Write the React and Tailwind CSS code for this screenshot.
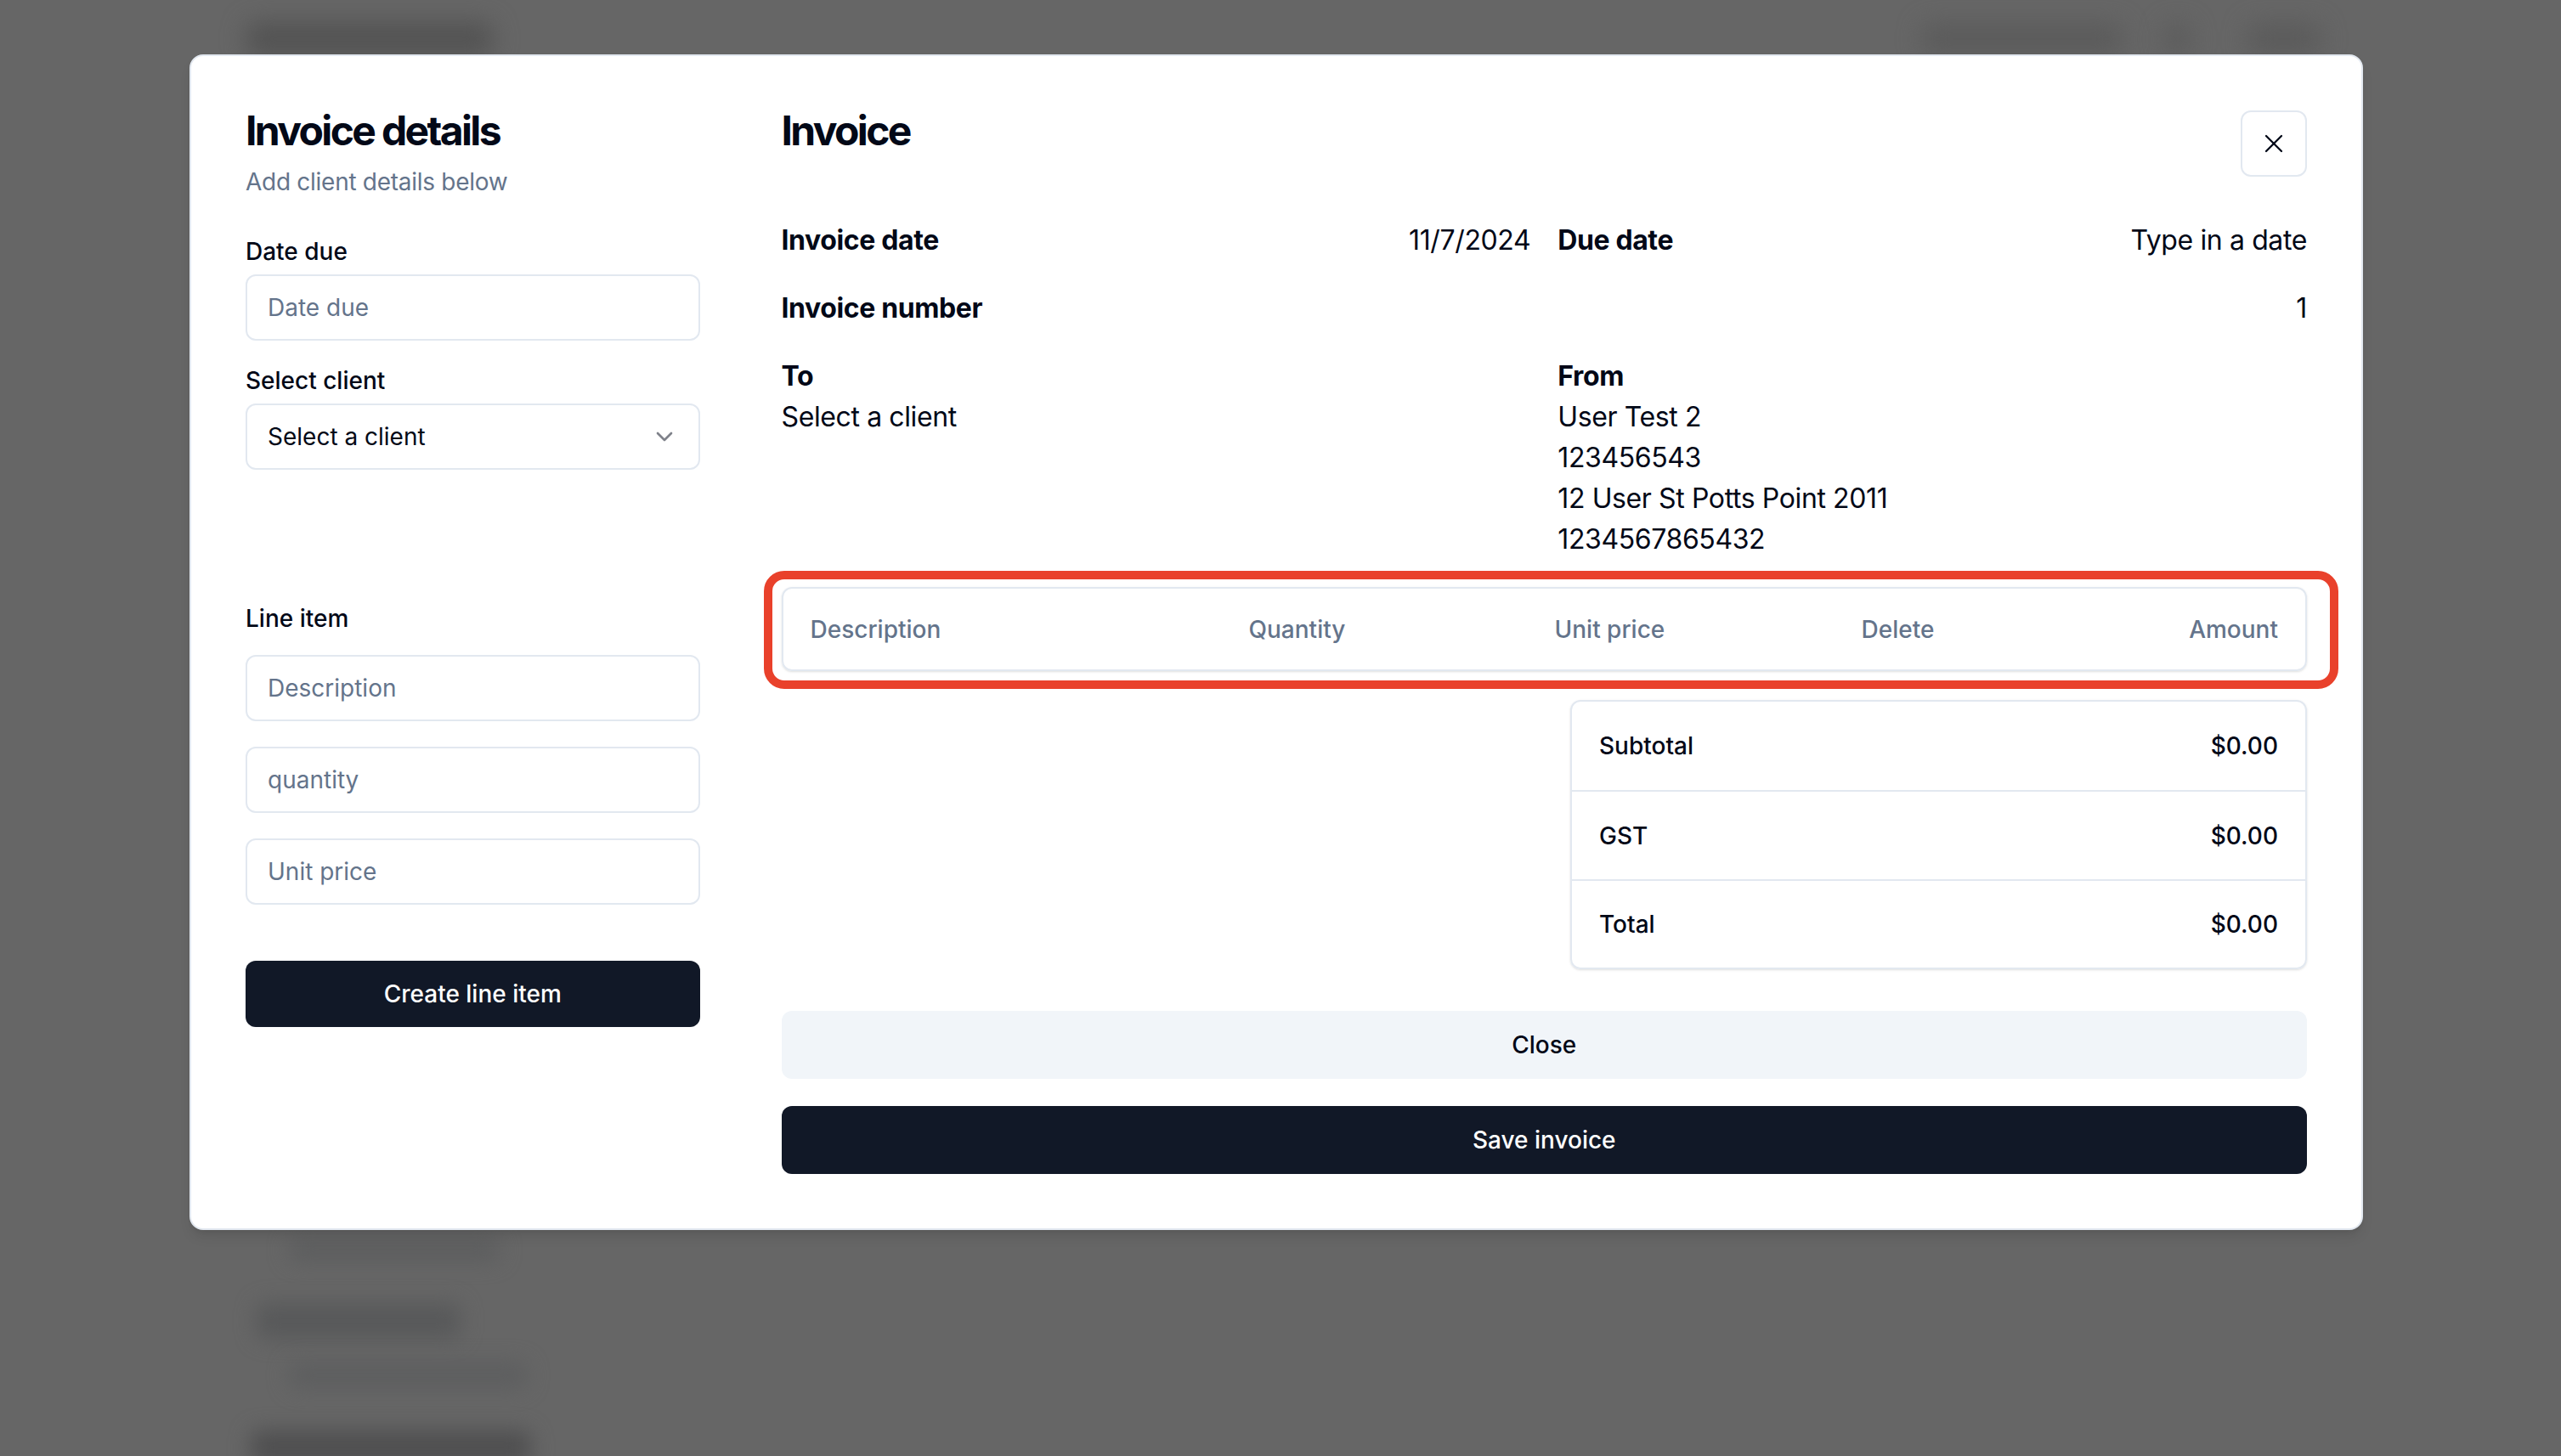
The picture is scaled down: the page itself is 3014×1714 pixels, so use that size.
import React from "react";
import { X, ChevronDown } from "lucide-react";

function Label({ children, className = "" }) {
  return (
    <div className={"text-[28px] leading-[28px] font-medium text-[#020817] " + className}>
      {children}
    </div>
  );
}

function Field({ placeholder, className = "" }) {
  return (
    <div
      className={
        "h-[78px] w-full rounded-[12px] border-2 border-[#e2e8f0] bg-white px-[24px] flex items-center text-[28px] text-[#64748b] " +
        className
      }
    >
      {placeholder}
    </div>
  );
}

export default function App() {
  return (
    <div className="relative w-[3014px] h-[1714px] overflow-hidden bg-[#666666] font-['Inter',sans-serif]">
      {/* blurred page content beneath the overlay */}
      <div className="absolute left-[290px] top-[26px] w-[290px] h-[40px] rounded-[12px] bg-[#535353] blur-[14px]" />
      <div className="absolute left-[2262px] top-[28px] w-[236px] h-[36px] rounded-[12px] bg-[#5b5b5b] blur-[14px]" />
      <div className="absolute left-[2548px] top-[28px] w-[30px] h-[36px] rounded-[12px] bg-[#5b5b5b] blur-[14px]" />
      <div className="absolute left-[2645px] top-[28px] w-[86px] h-[36px] rounded-[12px] bg-[#5b5b5b] blur-[14px]" />
      <div className="absolute left-[340px] top-[1458px] w-[248px] h-[26px] rounded-[12px] bg-[#5c5d5e] blur-[12px]" />
      <div className="absolute left-[302px] top-[1534px] w-[240px] h-[42px] rounded-[12px] bg-[#58595a] blur-[12px]" />
      <div className="absolute left-[340px] top-[1604px] w-[280px] h-[30px] rounded-[12px] bg-[#5d5e5f] blur-[12px]" />
      <div className="absolute left-[295px] top-[1684px] w-[330px] h-[40px] rounded-[12px] bg-[#4f4f50] blur-[12px]" />

      {/* modal */}
      <div className="absolute left-[223px] top-[64px] w-[2558px] rounded-[16px] border-2 border-[#e2e8f0] bg-white p-[64px] shadow-lg">
        <div className="grid grid-cols-4 gap-x-[96px] items-start">
          {/* left column */}
          <div className="col-span-1 flex flex-col">
            <h2 className="text-[48px] leading-[48px] font-bold tracking-[-0.055em] text-[#020817]">
              Invoice details
            </h2>
            <p className="mt-[16px] text-[28px] leading-[40px] tracking-[-0.01em] text-[#64748b]">
              Add client details below
            </p>

            <Label className="mt-[48px]">Date due</Label>
            <Field placeholder="Date due" className="mt-[13px]" />

            <Label className="mt-[33px]">Select client</Label>
            <div className="mt-[13px] h-[78px] w-full rounded-[12px] border-2 border-[#e2e8f0] bg-white px-[24px] flex items-center justify-between text-[28px] text-[#020817]">
              <span>Select a client</span>
              <ChevronDown size={32} strokeWidth={2} className="opacity-50" />
            </div>

            <Label className="mt-[161px]">Line item</Label>
            <Field placeholder="Description" className="mt-[29px]" />
            <Field placeholder="quantity" className="mt-[30px]" />
            <Field placeholder="Unit price" className="mt-[30px]" />

            <div className="mt-[66px] h-[78px] w-full rounded-[12px] bg-[#111827] flex items-center justify-center text-[28px] font-medium text-white">
              Create line item
            </div>
          </div>

          {/* right column */}
          <div className="col-span-3 flex flex-col">
            <div className="flex items-start justify-between">
              <h2 className="text-[48px] leading-[48px] font-bold tracking-[-0.055em] text-[#020817]">Invoice</h2>
              <div className="w-[78px] h-[78px] rounded-[12px] border-2 border-[#e2e8f0] flex items-center justify-center text-[#020817]">
                <X size={36} strokeWidth={1.5} />
              </div>
            </div>

            <div className="mt-[51px] flex flex-col gap-[32px] text-[32px] leading-[48px] tracking-[-0.012em] text-[#020817]">
              <div className="grid grid-cols-2 gap-x-[32px]">
                <div className="flex justify-between">
                  <span className="font-bold">Invoice date</span>
                  <span>11/7/2024</span>
                </div>
                <div className="flex justify-between">
                  <span className="font-bold">Due date</span>
                  <span>Type in a date</span>
                </div>
              </div>
              <div className="flex justify-between">
                <span className="font-bold">Invoice number</span>
                <span>1</span>
              </div>
              <div className="grid grid-cols-2 gap-x-[32px]">
                <div className="flex flex-col">
                  <span className="font-bold">To</span>
                  <span>Select a client</span>
                </div>
                <div className="flex flex-col">
                  <span className="font-bold">From</span>
                  <span>User Test 2</span>
                  <span>123456543</span>
                  <span>12 User St Potts Point 2011</span>
                  <span>1234567865432</span>
                </div>
              </div>
            </div>

            {/* line items table */}
            <div className="relative mt-[32px]">
              <div className="h-[99px] rounded-[12px] border-2 border-[#e2e8f0] shadow-sm grid grid-cols-[516px_360px_361px_1fr_1fr] items-center text-[28px] font-medium text-[#64748b]">
                <div className="px-[32px]">Description</div>
                <div className="px-[32px]">Quantity</div>
                <div className="px-[32px]">Unit price</div>
                <div className="px-[32px]">Delete</div>
                <div className="px-[32px] text-right">Amount</div>
              </div>
              <div className="pointer-events-none absolute left-[-21px] right-[-37px] top-[-19px] bottom-[-21px] rounded-[24px] border-[10px] border-[#e9412b]" />
            </div>

            {/* totals */}
            <div className="mt-[34px] ml-auto w-[867px] rounded-[12px] border-2 border-[#e2e8f0] shadow-sm text-[28px] font-medium text-[#020817]">
              <div className="h-[104px] px-[32px] flex items-center justify-between">
                <span>Subtotal</span>
                <span>$0.00</span>
              </div>
              <div className="h-[105px] px-[32px] flex items-center justify-between border-t-2 border-[#e2e8f0]">
                <span>GST</span>
                <span>$0.00</span>
              </div>
              <div className="h-[104px] px-[32px] flex items-center justify-between border-t-2 border-[#e2e8f0]">
                <span>Total</span>
                <span>$0.00</span>
              </div>
            </div>

            <div className="mt-[49px] h-[80px] w-full rounded-[12px] bg-[#f1f5f9] flex items-center justify-center text-[28px] font-medium text-[#020817]">
              Close
            </div>
            <div className="mt-[32px] h-[80px] w-full rounded-[12px] bg-[#111827] flex items-center justify-center text-[28px] font-medium text-white">
              Save invoice
            </div>
          </div>
        </div>
      </div>
    </div>
  );
}
